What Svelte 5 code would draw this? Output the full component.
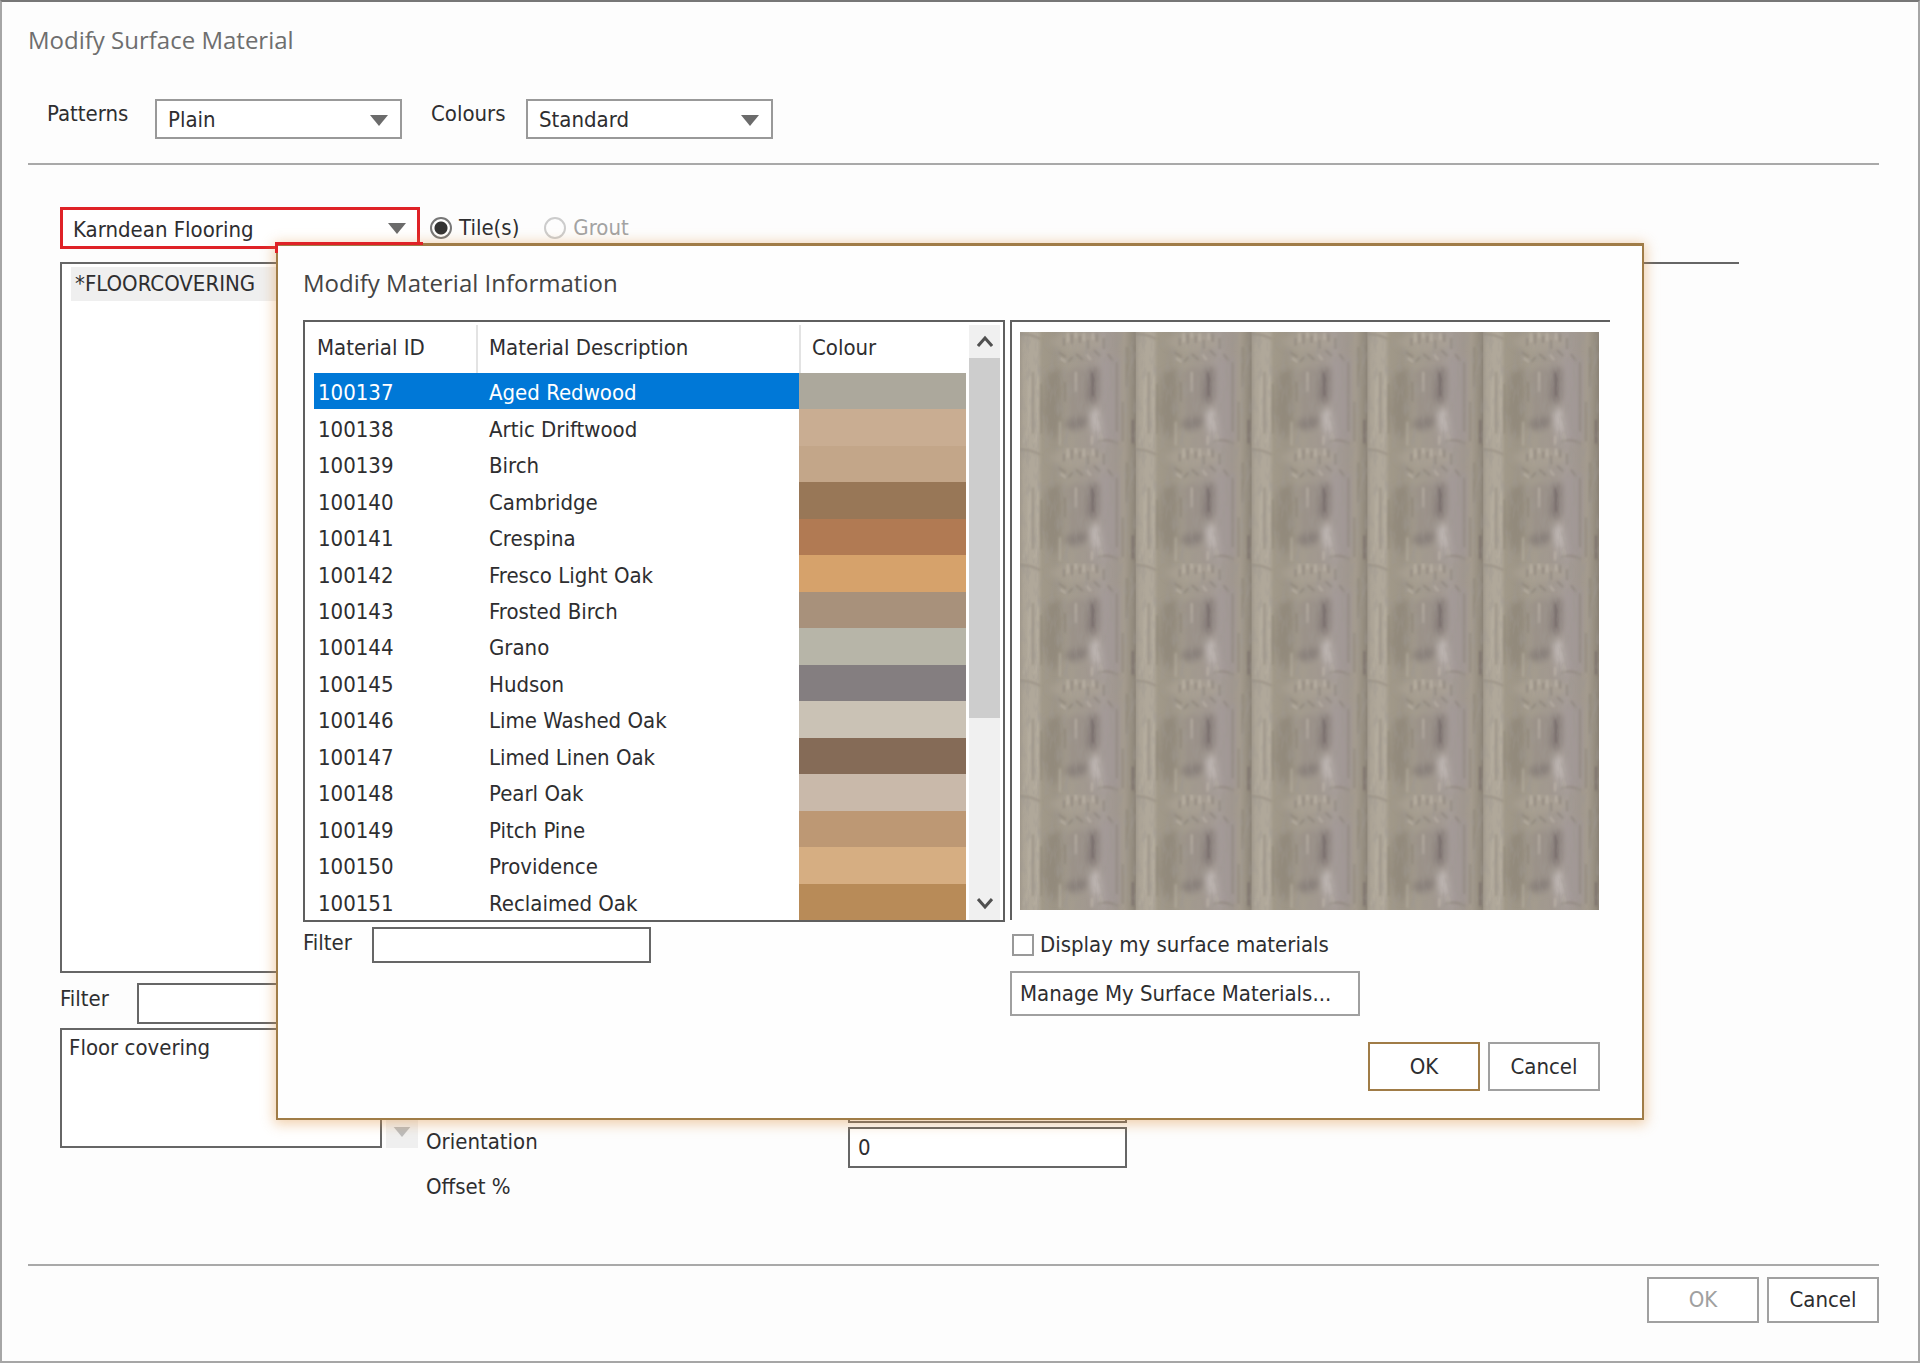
<script lang="ts">
  interface Material {
    id: string;
    name: string;
    colour: string;
  }

  const materials: Material[] = [
    { id: '100137', name: 'Aged Redwood', colour: '#aca89c' },
    { id: '100138', name: 'Artic Driftwood', colour: '#c9ad92' },
    { id: '100139', name: 'Birch', colour: '#c3a689' },
    { id: '100140', name: 'Cambridge', colour: '#987757' },
    { id: '100141', name: 'Crespina', colour: '#b17a53' },
    { id: '100142', name: 'Fresco Light Oak', colour: '#d6a26b' },
    { id: '100143', name: 'Frosted Birch', colour: '#a8917b' },
    { id: '100144', name: 'Grano', colour: '#b7b5a8' },
    { id: '100145', name: 'Hudson', colour: '#847e80' },
    { id: '100146', name: 'Lime Washed Oak', colour: '#cac2b5' },
    { id: '100147', name: 'Limed Linen Oak', colour: '#856b57' },
    { id: '100148', name: 'Pearl Oak', colour: '#c9b9aa' },
    { id: '100149', name: 'Pitch Pine', colour: '#bd9874' },
    { id: '100150', name: 'Providence', colour: '#d6ae82' },
    { id: '100151', name: 'Reclaimed Oak', colour: '#b88b58' }
  ];

  let selectedId = $state('100137');
  let part = $state('tiles');
  let orientation = $state('0');
</script>

{#snippet arrow()}
  <svg class="arrow" viewBox="0 0 20 12" aria-hidden="true"><path d="M0 0h20L10 12z" /></svg>
{/snippet}

<main class="window">
  <h1>Modify Surface Material</h1>

  <div class="toolbar">
    <label for="patterns">Patterns</label>
    <div class="combo">
      <select id="patterns"><option>Plain</option></select>
      {@render arrow()}
    </div>
    <label for="colours">Colours</label>
    <div class="combo">
      <select id="colours"><option>Standard</option></select>
      {@render arrow()}
    </div>
  </div>

  <hr />

  <section class="workspace">
    <div class="source">
      <div class="combo range">
        <select aria-label="Range"><option>Karndean Flooring</option></select>
        {@render arrow()}
      </div>
      <label class="radio"><input type="radio" name="part" value="tiles" bind:group={part} />Tile(s)</label>
      <label class="radio off"><input type="radio" name="part" value="grout" bind:group={part} disabled />Grout</label>
    </div>

    <div class="columns">
      <div class="library">
        <ul class="list"><li>*FLOORCOVERING</li></ul>
        <div class="filter">
          <label for="library-filter">Filter</label>
          <input id="library-filter" type="text" />
        </div>
        <div class="note">Floor covering</div>
      </div>
      <div class="stepper">
        <svg viewBox="0 0 20 12" aria-hidden="true"><path d="M0 0h20L10 12z" /></svg>
      </div>
      <div class="details">
        <input class="size" type="text" aria-label="Size" />
        <label for="orientation">Orientation</label>
        <input id="orientation" type="text" bind:value={orientation} />
        <span class="offset">Offset %</span>
      </div>
    </div>
  </section>

  <hr />

  <div class="actions">
    <button disabled>OK</button>
    <button>Cancel</button>
  </div>

  <div class="dialog" role="dialog" aria-labelledby="dialog-title">
    <h2 id="dialog-title">Modify Material Information</h2>

    <div class="panes">
      <div class="materials">
        <table>
          <thead>
            <tr><th>Material ID</th><th>Material Description</th><th>Colour</th></tr>
          </thead>
          <tbody>
            {#each materials as material (material.id)}
              <tr class:selected={material.id === selectedId} onclick={() => (selectedId = material.id)}>
                <td>{material.id}</td>
                <td>{material.name}</td>
                <td style:background={material.colour}></td>
              </tr>
            {/each}
          </tbody>
        </table>
        <div class="scrollbar">
          <svg viewBox="0 0 16 12" aria-hidden="true"><path d="M1 11l7-8 7 8" /></svg>
          <div class="track"><div class="thumb"></div></div>
          <svg viewBox="0 0 16 12" aria-hidden="true"><path d="M1 1l7 8 7-8" /></svg>
        </div>
      </div>

      <div class="preview">
        <svg viewBox="0 0 580 580" preserveAspectRatio="none" role="img" aria-label="Material preview">
          <defs>
            <linearGradient id="plank">
              <stop offset="0" stop-color="#a0988b" />
              <stop offset=".03" stop-color="#aca496" />
              <stop offset=".09" stop-color="#b0a89a" />
              <stop offset=".15" stop-color="#b0a89a" />
              <stop offset=".19" stop-color="#a19989" />
              <stop offset=".3" stop-color="#9d9587" />
              <stop offset=".42" stop-color="#a49c8e" />
              <stop offset=".6" stop-color="#a19890" />
              <stop offset=".72" stop-color="#a59c97" />
              <stop offset=".83" stop-color="#a0978f" />
              <stop offset=".9" stop-color="#a49b8e" />
              <stop offset=".95" stop-color="#999183" />
              <stop offset="1" stop-color="#8b8377" />
            </linearGradient>
            <filter id="soft" x="-50%" y="-50%" width="200%" height="200%"><feGaussianBlur stdDeviation="3" /></filter>
            <filter id="thin" x="-20%" y="-20%" width="140%" height="140%"><feGaussianBlur stdDeviation="1" /></filter>
            <filter id="grain" x="0" y="0" width="100%" height="100%">
              <feTurbulence type="fractalNoise" baseFrequency=".2 .06" numOctaves="3" seed="8" />
              <feColorMatrix values="0 0 0 0 .34  0 0 0 0 .31  0 0 0 0 .28  1.3 0 0 0 -.6" />
            </filter>
            <pattern id="wood" width="116" height="116" patternUnits="userSpaceOnUse">
              <rect width="116" height="116" fill="url(#plank)" />
              <g filter="url(#soft)">
                <path d="M26 44q6-8 16-6v48l-6 22-8-6-6-20z" fill="#8d8578" opacity=".7" />
                <path d="M46 40q12-8 24 0v48q-10 16-22 10z" fill="#958c85" opacity=".6" />
                <path d="M69 36h10v30l-7 8-5-8z" fill="#7d7472" opacity=".75" />
                <path d="M45 90q10-6 24-4l-4 10q-10 4-20 0z" fill="#7e7672" opacity=".6" />
                <path d="M70 82q4-10 9-2l2 18-8 4z" fill="#c0b8b5" />
                <path d="M74 98h10l-2 14h-8z" fill="#b3aaa6" opacity=".8" />
                <path d="M82 26h18v84H84z" fill="#a1989a" opacity=".5" />
                <ellipse cx="58" cy="10" rx="28" ry="9" fill="#aca395" opacity=".6" />
              </g>
              <g filter="url(#thin)" fill="none" stroke-width="2">
                <path d="M9 45v52l-5 14M18 37v62l-3 12M40 90v24" stroke="#c0b8a8" opacity=".5" />
                <path d="M13 40v62M21 52v50M45 50v20M97 30v70M107 15v40M103 70v40" stroke="#7b7267" opacity=".35" />
                <path d="M44 6v8M52 2v10M60 4v7M68 8v9M77 2v8M84 6v11M38 20l8 5M56 22l7 6M74 18l6 6M88 22l5 7M48 30l5-5" stroke="#7f776d" opacity=".5" />
                <path d="M48 1v9M56 0v6M64 1v8M73 1v7M81 102v9M72 104v9M56 40v20M40 26l6 4M66 22l5 6" stroke="#c4bcb0" opacity=".6" />
                <path d="M73 40v24M113 88v24" stroke="#6a615e" opacity=".6" />
                <path d="M0 2q12 0 20 5M78 110q10-4 20 2" stroke="#857c71" opacity=".5" />
              </g>
              <rect width="116" height="116" filter="url(#grain)" />
            </pattern>
          </defs>
          <rect width="580" height="580" fill="url(#wood)" />
        </svg>
      </div>
    </div>

    <div class="below">
      <div class="filter">
        <label for="material-filter">Filter</label>
        <input id="material-filter" type="text" />
      </div>
      <div class="own">
        <label class="check"><input type="checkbox" />Display my surface materials</label>
        <button>Manage My Surface Materials...</button>
      </div>
    </div>

    <div class="actions">
      <button class="default">OK</button>
      <button>Cancel</button>
    </div>
  </div>
</main>

<style>
  :global(*) { box-sizing: border-box; }
  :global(body) { margin: 0; background: #fdfdfd; color: #2e2e30; font: 22px/26px "DejaVu Sans Condensed", Tahoma, sans-serif; }
  h1, h2 { margin: 0; font: 400 24px/30px "Open Sans", "Segoe UI", sans-serif; }
  h1 { color: #6e6e6e; }
  h2 { color: #444; }
  hr { width: 100%; height: 2px; margin: 0; border: 0; background: #a9a9a9; }
  input, select, button { margin: 0; color: inherit; font: inherit; }
  input[type='text'] { height: 41px; padding: 0 8px; border: 2px solid #666; border-radius: 0; background: #fff; }
  button { min-width: 112px; height: 46px; padding: 0 8px; border: 2px solid #a0a0a0; background: #fff; }
  button:disabled { color: #a0a0a0; }

  .window { position: relative; display: flex; flex-direction: column; min-height: 100vh; padding: 23px 39px 38px 26px; border: 2px solid #a6a6a6; border-top-color: #777; }
  .actions { display: flex; justify-content: flex-end; gap: 8px; }
  .window > .actions { margin-top: 11px; }

  .toolbar { display: flex; align-items: flex-start; margin: 44px 0 24px 19px; }
  .toolbar label { width: 108px; padding-top: 2px; }
  .toolbar .combo { width: 247px; }
  .toolbar .combo + label { width: 95px; margin-left: 29px; }
  .combo { position: relative; }
  select { width: 100%; height: 40px; padding: 2px 11px 0; border: 2px solid #999; border-radius: 0; background: #fff; appearance: none; }
  .arrow { position: absolute; top: 16px; right: 14px; width: 18px; height: 11px; fill: #6b6b6b; pointer-events: none; }

  .workspace { flex: 1; padding: 42px 140px 0 32px; }
  .source { display: flex; align-items: flex-start; }
  .range { width: 360px; margin-right: 10px; }
  .range select { height: 42px; padding: 3px 10px 0; border: 3px solid #df2227; }
  .radio { display: flex; align-items: center; gap: 7px; height: 42px; margin-right: 25px; }
  .radio input { width: 22px; height: 22px; border: 2px solid #777; border-radius: 50%; appearance: none; }
  .radio input:checked { background: radial-gradient(circle, #333 6px, #fff 7px); }
  .off { color: #a3a3a3; }
  .off input { border-color: #ccc; }

  .columns { display: flex; align-items: stretch; margin-top: 13px; }
  .library { flex: none; width: 322px; }
  .list { height: 711px; margin: 0; padding: 3px 9px; border: 2px solid #666; list-style: none; background: #fff; }
  .list li { padding: 4px; background: #efefef; }
  .library .filter { display: flex; margin-top: 10px; }
  .library .filter label { width: 77px; padding-top: 3px; }
  .library .filter input { flex: 1; min-width: 0; }
  .note { height: 120px; margin-top: 4px; padding: 5px 7px; border: 2px solid #666; background: #fff; }
  .stepper { display: flex; align-items: flex-end; justify-content: center; align-self: flex-end; width: 32px; height: 36px; margin-left: 4px; padding-bottom: 11px; background: #efefef; }
  .stepper svg { width: 18px; height: 10px; fill: #bbb; }
  .details { display: grid; grid-template-columns: 422px 279px; align-content: end; flex: 1; gap: 4px 0; margin-left: 8px; margin-bottom: -52px; border-top: 2px solid #666; }
  .size { grid-column: 2; }
  .details label { padding-top: 2px; }
  .offset { grid-column: 1; height: 28px; padding-top: 2px; }
  .details label, .offset { align-self: start; }

  .dialog { position: absolute; top: 241px; right: 274px; left: 274px; padding: 22px 42px 27px 25px; border: 2px solid #a07c47; border-top-width: 3px; background: #fefefe; box-shadow: 0 2px 12px 2px rgb(224 150 70 / 45%); }
  /* carries the highlight of the range box over the top edge of the dialog */
  .dialog::before { content: ''; position: absolute; top: -4px; left: -3px; width: 145px; height: 8px; border: solid #df2227; border-width: 3px 0 0 3px; clip-path: polygon(0 0, 100% 0, 100% 3px, 3px 3px, 3px 100%, 0 100%); }
  .panes { display: flex; gap: 5px; margin: 22px -10px 0 0; }
  .materials { display: flex; width: 702px; height: 602px; padding-left: 9px; border: 2px solid #5f5f5f; background: #fff; }
  table { display: flex; flex: 1; flex-direction: column; }
  tr { display: grid; grid-template-columns: 162px 323px 1fr; height: 100%; text-align: left; }
  thead { height: 51px; }
  tbody { display: grid; flex: 1; grid-auto-rows: 1fr; }
  th { margin-top: 3px; padding: 10px 0 0 11px; border-left: 2px solid #e3e3e3; font-weight: 400; }
  th:first-child { padding-left: 3px; border-left: 0; }
  td { display: flex; align-items: center; padding: 4px 0 0 13px; }
  td:first-child { padding-left: 4px; }
  .selected td { background: #0078d7; color: #fff; }
  .scrollbar { display: flex; flex-direction: column; align-items: center; width: 31px; margin: 3px 3px 0; padding: 10px 0; background: #f0f0f0; }
  .scrollbar svg { width: 16px; height: 12px; fill: none; stroke: #505050; stroke-width: 3; }
  .track { flex: 1; width: 100%; margin: 11px 0; }
  .thumb { height: 360px; background: #cdcdcd; }
  .preview { flex: 1; height: 600px; padding: 10px 11px 10px 8px; border: solid #5f5f5f; border-width: 2px 0 0 2px; }
  .preview svg { display: block; width: 100%; height: 100%; }

  .below { display: flex; justify-content: space-between; margin-top: 5px; }
  .below .filter { display: flex; align-items: flex-start; }
  .below .filter label { width: 69px; padding-top: 3px; }
  .below .filter input { width: 279px; height: 36px; }
  .own { width: 590px; margin-top: 5px; }
  .own button { min-width: 350px; height: 45px; margin-top: 13px; text-align: left; }
  .check { display: flex; align-items: center; gap: 6px; padding-left: 2px; }
  .check input { width: 22px; height: 22px; border: 2px solid #999; background: #fff; appearance: none; }
  .dialog .actions { margin-top: 26px; }
  .dialog .actions button { height: 49px; }
  .dialog .default { border-color: #a07c47; }
</style>
